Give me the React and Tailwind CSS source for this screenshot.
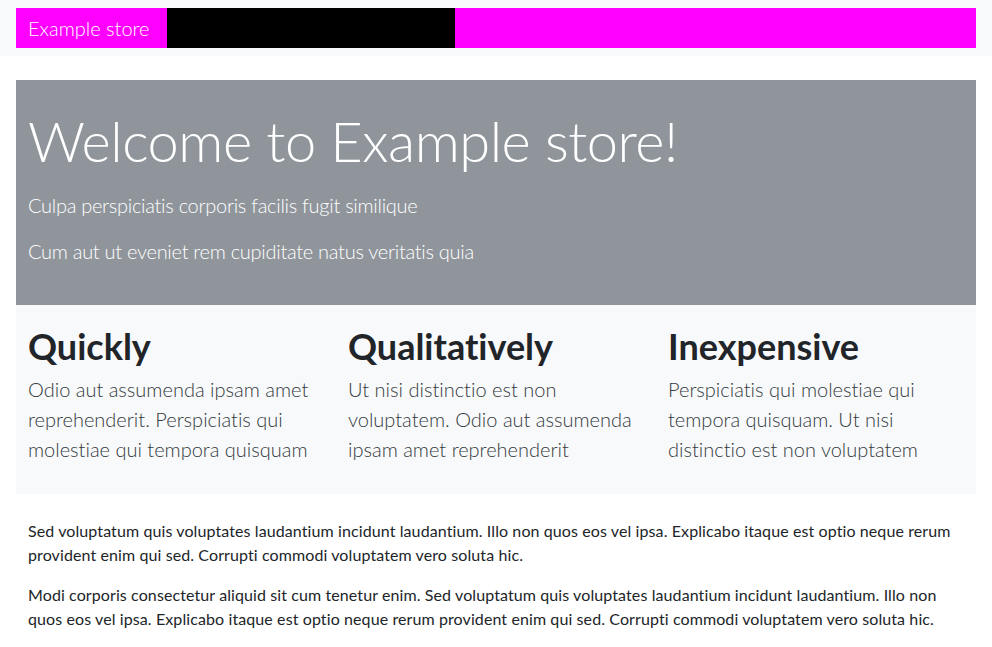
export default function App() {
  const features = [
    {
      title: 'Quickly',
      text: 'Odio aut assumenda ipsam amet reprehenderit. Perspiciatis qui molestiae qui tempora quisquam',
    },
    {
      title: 'Qualitatively',
      text: 'Ut nisi distinctio est non voluptatem. Odio aut assumenda ipsam amet reprehenderit',
    },
    {
      title: 'Inexpensive',
      text: 'Perspiciatis qui molestiae qui tempora quisquam. Ut nisi distinctio est non voluptatem',
    },
  ];

  return (
    <div className="min-h-screen bg-white font-['Lato',sans-serif] text-[#212529] [font-variant-ligatures:none]">
      <header className="bg-[#f8f9fa] px-4 py-2">
        <nav className="flex h-10 bg-[#ff00ff]">
          <a className="flex w-[151px] items-center px-3 text-xl font-light text-white">Example store</a>
          <div className="w-[288px] bg-black"></div>
        </nav>
      </header>

      <main className="px-4 pt-6">
        <section className="bg-[#8f959b] px-3 pt-[27px] pb-[39px] text-white">
          <h1 className="text-[56px] font-light leading-[1.2] tracking-[-0.5px] mb-4">Welcome to Example store!</h1>
          <p className="text-xl font-light leading-[30px] tracking-[-0.28px] mb-4">Culpa perspiciatis corporis facilis fugit similique</p>
          <p className="text-xl font-light leading-[30px] tracking-[-0.28px]">Cum aut ut eveniet rem cupiditate natus veritatis quia</p>
        </section>

        <section className="grid grid-cols-3 bg-[#f8f9fa] pt-5 pb-[30px]">
          {features.map((f) => (
            <div key={f.title} className="px-3">
              <h2 className="text-[36px] font-bold leading-[1.2] mb-[6px]">{f.title}</h2>
              <p className="text-xl font-light leading-[30px] text-[#343a40]">{f.text}</p>
            </div>
          ))}
        </section>

        <section className="px-3 pt-[25px] text-base leading-6 tracking-[0.1px]">
          <p className="mb-4">
            Sed voluptatum quis voluptates laudantium incidunt laudantium. Illo non quos eos vel ipsa. Explicabo itaque est optio neque rerum provident enim qui sed. Corrupti commodi voluptatem vero soluta hic.
          </p>
          <p>
            Modi corporis consectetur aliquid sit cum tenetur enim. Sed voluptatum quis voluptates laudantium incidunt laudantium. Illo non quos eos vel ipsa. Explicabo itaque est optio neque rerum provident enim qui sed. Corrupti commodi voluptatem vero soluta hic.
          </p>
        </section>
      </main>
    </div>
  );
}
